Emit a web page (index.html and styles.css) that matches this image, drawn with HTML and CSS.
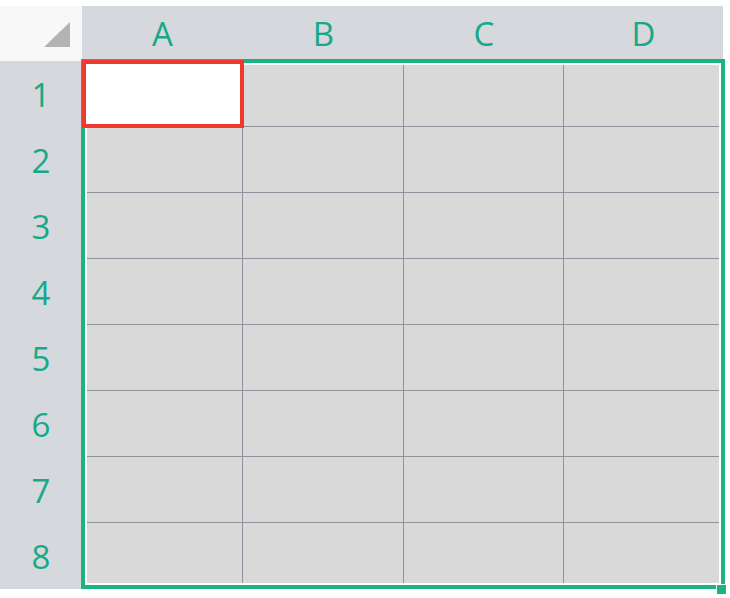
FILE: index.html
```html
<!DOCTYPE html>
<html>
<head>
<meta charset="utf-8">
<link rel="stylesheet" href="styles.css">
</head>
<body>
<div class="sheet">
  <div class="corner"><span class="tri"></span></div>
  <div class="colhead">A</div>
  <div class="colhead">B</div>
  <div class="colhead">C</div>
  <div class="colhead">D</div>

  <div class="rowhead">1</div>
  <div class="cell active"></div><div class="cell"></div><div class="cell"></div><div class="cell"></div>
  <div class="rowhead">2</div>
  <div class="cell"></div><div class="cell"></div><div class="cell"></div><div class="cell"></div>
  <div class="rowhead">3</div>
  <div class="cell"></div><div class="cell"></div><div class="cell"></div><div class="cell"></div>
  <div class="rowhead">4</div>
  <div class="cell"></div><div class="cell"></div><div class="cell"></div><div class="cell"></div>
  <div class="rowhead">5</div>
  <div class="cell"></div><div class="cell"></div><div class="cell"></div><div class="cell"></div>
  <div class="rowhead">6</div>
  <div class="cell"></div><div class="cell"></div><div class="cell"></div><div class="cell"></div>
  <div class="rowhead">7</div>
  <div class="cell"></div><div class="cell"></div><div class="cell"></div><div class="cell"></div>
  <div class="rowhead">8</div>
  <div class="cell"></div><div class="cell"></div><div class="cell"></div><div class="cell"></div>

  <div class="selection"></div>
  <div class="handle"></div>
</div>
</body>
</html>
```

FILE: styles.css
```css
html, body {
  margin: 0;
  padding: 0;
  background: #ffffff;
}
body {
  width: 730px;
  height: 598px;
  overflow: hidden;
}
.sheet {
  position: relative;
  display: grid;
  grid-template-columns: 82px 161px 161px 160px 159px;
  grid-template-rows: 55px repeat(8, 66px);
  padding-top: 6px;
  width: 723px;
  font-family: "Open Sans", "Noto Sans", sans-serif;
  font-weight: 400;
  color: #17a987;
}
.corner {
  background: #f8f8f8;
  position: relative;
}
.tri {
  position: absolute;
  left: 44px;
  top: 16px;
  width: 0;
  height: 0;
  border-style: solid;
  border-width: 0 0 25px 26px;
  border-color: transparent transparent #b3b3b3 transparent;
}
.colhead {
  background: #d5d8dd;
  display: flex;
  align-items: center;
  justify-content: center;
  font-size: 33px;
}
.rowhead {
  background: #d5d8dd;
  display: flex;
  align-items: center;
  justify-content: center;
  font-size: 33px;
}
.cell {
  background: #d9d9d9;
  border-right: 1px solid #8d929c;
  border-bottom: 1px solid #8d929c;
}
.cell.active {
  background: #ffffff;
  border: 4px solid #f0392e;
  margin: -1px -1px -1px 0;
  position: relative;
  z-index: 2;
}
.selection {
  position: absolute;
  left: 81px;
  top: 59px;
  width: 644px;
  height: 530px;
  box-sizing: border-box;
  border: 4px solid #1bb47f;
  box-shadow: inset 0 0 0 2px #ffffff;
  pointer-events: none;
  z-index: 1;
}
.handle {
  position: absolute;
  left: 716px;
  top: 584px;
  width: 9px;
  height: 9px;
  background: #1bb47f;
  border: 1px solid #ffffff;
  z-index: 3;
}
```
